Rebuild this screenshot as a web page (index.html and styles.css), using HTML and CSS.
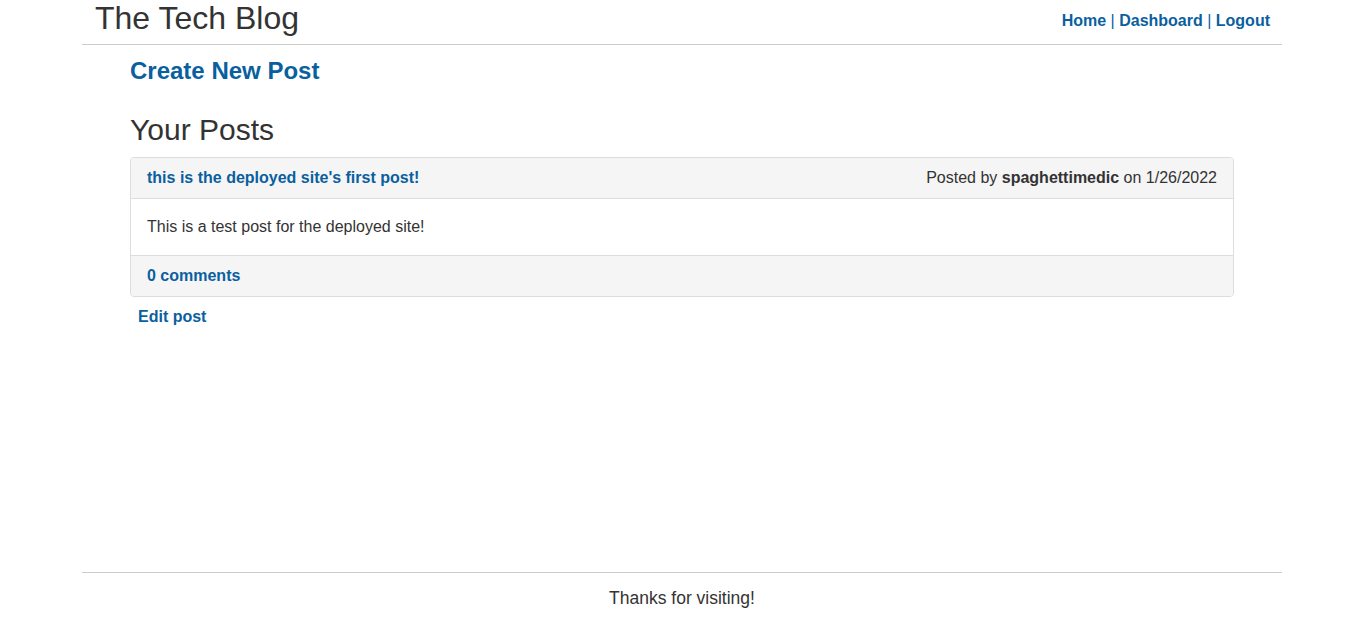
FILE: index.html
```html
<!DOCTYPE html>
<html lang="en">
<head>
<meta charset="utf-8">
<title>The Tech Blog</title>
<link rel="stylesheet" href="styles.css">
</head>
<body>
<header class="site-header">
  <h1 class="site-title">The Tech Blog</h1>
  <nav class="site-nav">
    <a href="#">Home</a> | <a href="#">Dashboard</a> | <a href="#">Logout</a>
  </nav>
</header>
<main class="main">
  <h3 class="create-link"><a href="#">Create New Post</a></h3>
  <h2 class="section-title">Your Posts</h2>
  <article class="panel">
    <div class="panel-heading">
      <a href="#" class="post-title">this is the deployed site's first post!</a>
      <span class="post-meta">Posted by <strong>spaghettimedic</strong> on 1/26/2022</span>
    </div>
    <div class="panel-body">This is a test post for the deployed site!</div>
    <div class="panel-footer"><a href="#">0 comments</a></div>
  </article>
  <a href="#" class="edit-link">Edit post</a>
</main>
<footer class="site-footer">Thanks for visiting!</footer>
</body>
</html>
```
FILE: styles.css
```css
* { box-sizing: border-box; }
html, body { margin: 0; padding: 0; }
body {
  font-family: "Liberation Sans", Arial, Helvetica, sans-serif;
  font-size: 16px;
  color: #333;
  background: #fff;
  min-height: 100vh;
  display: flex;
  flex-direction: column;
}
a { color: #0a5f9f; text-decoration: none; font-weight: bold; }

.site-header {
  width: 1200px;
  margin-left: calc(50% - 600.5px);
  height: 45px;
  border-bottom: 1px solid #ccc;
  display: flex;
  justify-content: space-between;
  padding: 0 12px 0 13px;
}
.site-title {
  margin: 0;
  font-size: 32px;
  font-weight: normal;
  line-height: 36px;
  color: #333;
}
.site-nav {
  font-size: 16px;
  line-height: 18px;
  padding-top: 12px;
  color: #0a5f9f;
}

.main {
  width: 1104px;
  margin-left: calc(50% - 552.5px);
  flex: 1;
}
.create-link {
  margin: 13px 0 0;
  font-size: 24px;
  line-height: 26px;
}
.section-title {
  margin: 29px 0 0;
  font-size: 30px;
  font-weight: normal;
  line-height: 33px;
  color: #333;
}
.panel {
  margin-top: 11px;
  border: 1px solid #ddd;
  border-radius: 4px;
  overflow: hidden;
}
.panel-heading {
  background: #f5f5f5;
  border-bottom: 1px solid #ddd;
  padding: 8px 16px;
  line-height: 24px;
  display: flex;
  justify-content: space-between;
}
.panel-body {
  padding: 16px;
  line-height: 24px;
}
.panel-footer {
  background: #f5f5f5;
  border-top: 1px solid #ddd;
  padding: 8px 16px;
  line-height: 24px;
}
.edit-link {
  display: inline-block;
  padding: 8px 8px 4px;
  line-height: 24px;
}

.site-footer {
  width: 1200px;
  margin-left: calc(50% - 600.5px);
  border-top: 1px solid #ccc;
  text-align: center;
  font-size: 17.5px;
  line-height: 27px;
  padding: 12px 0 8px;
}
```
